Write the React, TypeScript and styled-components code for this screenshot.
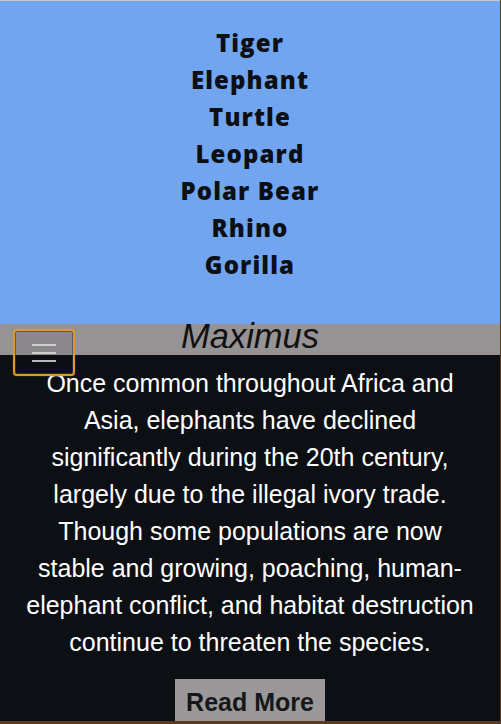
import React from "react";
import styled, { createGlobalStyle } from "styled-components";

const Global = createGlobalStyle`
  html, body { margin: 0; padding: 0; background: #5b3a22; }
  body { width: 501px; height: 724px; overflow: hidden; }
`;

const Frame = styled.div`
  width: 500px;
  height: 721px;
  border-top: 1px solid #c9c9c9;
  box-sizing: border-box;
  background: #0c0f14;
  overflow: hidden;
  position: relative;
  display: flex;
  flex-direction: column;
`;

const Hero = styled.section`
  height: 323px;
  flex-shrink: 0;
  background: #72a5f0;
  display: flex;
  flex-direction: column;
  align-items: center;
  padding-top: 23px;
  box-sizing: border-box;
`;

const Animal = styled.div`
  font-family: "Open Sans", sans-serif;
  font-weight: 800;
  font-size: 24px;
  letter-spacing: 1.1px;
  line-height: 37px;
  color: #0c0f14;
`;

const Band = styled.div`
  height: 31px;
  flex-shrink: 0;
  background: #969395;
  display: flex;
  justify-content: center;
  align-items: center;
`;

const Title = styled.h1`
  margin: 0;
  font-family: "Liberation Sans", Arial, sans-serif;
  font-style: italic;
  font-weight: 400;
  font-size: 34.5px;
  line-height: 31px;
  color: #111;
  transform: translateY(-3px);
`;

const Menu = styled.button`
  position: absolute;
  left: 13px;
  top: 328px;
  width: 62px;
  height: 47px;
  box-sizing: border-box;
  border: 2px solid #d99a2b;
  border-radius: 4px;
  background: rgba(12, 15, 20, 0.08);
  box-shadow: inset 0 0 0 1px rgba(60, 60, 70, 0.6), 0 0 1px #d99a2b;
  display: flex;
  flex-direction: column;
  justify-content: center;
  align-items: center;
  gap: 6px;
  padding: 0;
`;

const Bar = styled.span`
  display: block;
  width: 24px;
  height: 2px;
  background: #d8d8d8;
  opacity: 0.85;
`;

const Text = styled.p`
  margin: 10px 0 0;
  padding: 0 8px;
  font-family: "Liberation Sans", Arial, sans-serif;
  font-size: 25px;
  line-height: 37px;
  color: #ffffff;
  text-align: center;
`;

const Line = styled.span`
  display: block;
  white-space: nowrap;
`;

const ReadMore = styled.button`
  align-self: center;
  flex-shrink: 0;
  margin-top: 18px;
  background: #9a9899;
  border: none;
  padding: 8px 11px 8px;
  font-family: "Liberation Sans", Arial, sans-serif;
  font-weight: 700;
  font-size: 25px;
  line-height: 30px;
  color: #16171a;
`;

const animals = ["Tiger", "Elephant", "Turtle", "Leopard", "Polar Bear", "Rhino", "Gorilla"];

const lines = [
  "Once common throughout Africa and",
  "Asia, elephants have declined",
  "significantly during the 20th century,",
  "largely due to the illegal ivory trade.",
  "Though some populations are now",
  "stable and growing, poaching, human-",
  "elephant conflict, and habitat destruction",
  "continue to threaten the species.",
];

export default function App() {
  return (
    <>
      <Global />
      <Frame>
        <Hero>
          {animals.map((a) => (
            <Animal key={a}>{a}</Animal>
          ))}
        </Hero>
        <Band>
          <Title>Maximus</Title>
        </Band>
        <Menu aria-label="menu">
          <Bar />
          <Bar />
          <Bar />
        </Menu>
        <Text>
          {lines.map((l) => (
            <Line key={l}>{l}</Line>
          ))}
        </Text>
        <ReadMore>Read More</ReadMore>
      </Frame>
    </>
  );
}
